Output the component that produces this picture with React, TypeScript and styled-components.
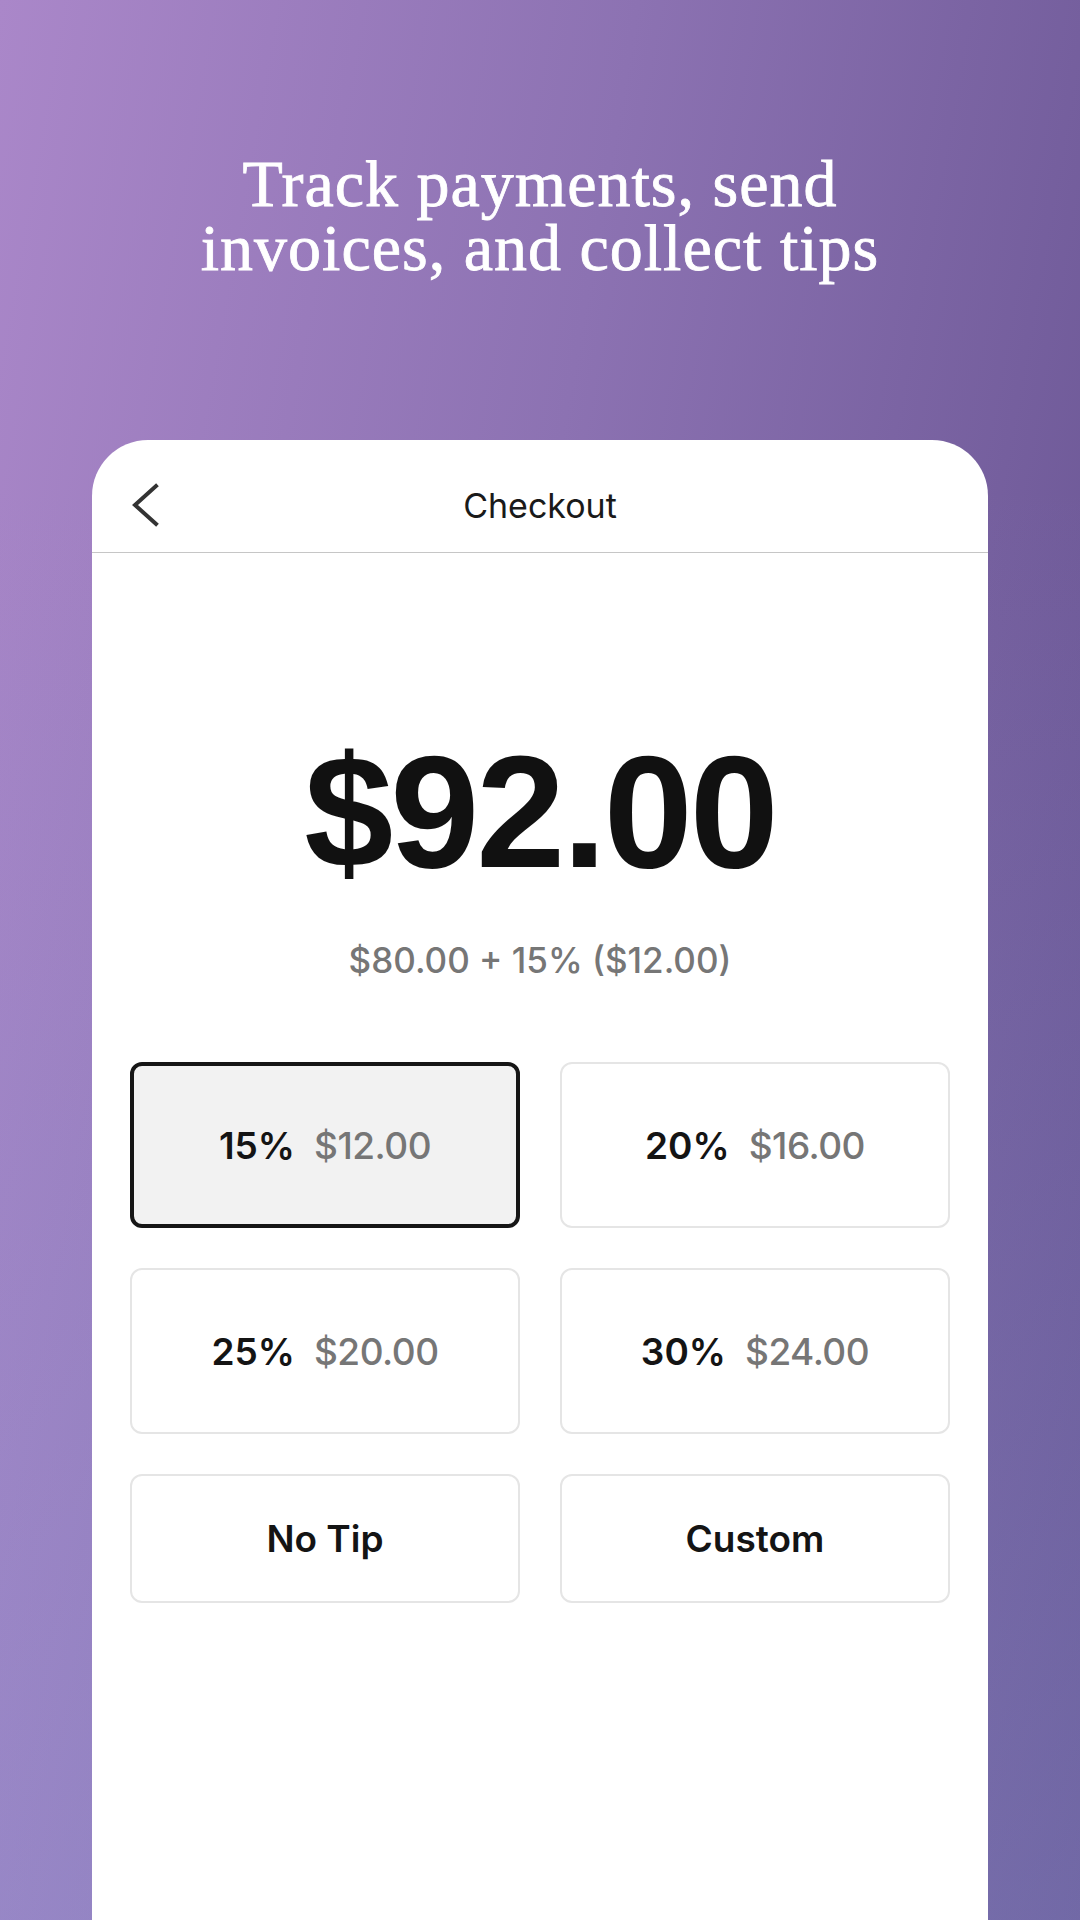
import React, { useState } from "react";
import styled, { createGlobalStyle } from "styled-components";

const GlobalStyle = createGlobalStyle`
  html, body {
    margin: 0;
    padding: 0;
  }
  body {
    font-family: Inter, "Liberation Sans", sans-serif;
    -webkit-font-smoothing: antialiased;
  }
`;

const Page = styled.div`
  height: 1920px;
  overflow: hidden;
  display: flex;
  flex-direction: column;
  align-items: center;
  background: linear-gradient(
      180deg,
      rgba(145, 160, 220, 0) 25%,
      rgba(145, 160, 220, 0.3) 100%
    ),
    linear-gradient(100deg, #aa87c9 0%, #8c72b2 45%, #64518f 100%);
`;

const Headline = styled.h1`
  margin: 152px 0 0;
  font-family: "Liberation Serif", "DejaVu Serif", serif;
  font-weight: 400;
  font-size: 66px;
  line-height: 64px;
  letter-spacing: 1px;
  color: #ffffff;
  -webkit-text-stroke: 0.8px #ffffff;
  text-align: center;
`;

const Card = styled.section`
  margin-top: 160px;
  width: 896px;
  flex: 1;
  background: #ffffff;
  border-radius: 56px 56px 0 0;
  display: flex;
  flex-direction: column;
`;

const Header = styled.header`
  box-sizing: border-box;
  height: 113px;
  padding-top: 18px;
  display: grid;
  grid-template-columns: 1fr auto 1fr;
  align-items: center;
  border-bottom: 1px solid #c6c6c6;
`;

const BackButton = styled.button`
  justify-self: start;
  margin-left: 39px;
  padding: 0;
  border: 0;
  background: none;
  display: flex;
  cursor: pointer;
`;

const Title = styled.h2`
  margin: 0;
  font-size: 34px;
  font-weight: 400;
  color: #1a1a1a;
`;

const Amount = styled.div`
  margin-top: 179px;
  text-align: center;
  font-family: "Liberation Sans", Arial, sans-serif;
  font-size: 160px;
  line-height: 160px;
  font-weight: 700;
  letter-spacing: -3px;
  color: #111111;
`;

const Breakdown = styled.div`
  margin-top: 48px;
  text-align: center;
  font-size: 35px;
  line-height: 40px;
  font-weight: 500;
  color: #767676;
`;

const TipGrid = styled.div`
  margin-top: 82px;
  padding: 0 38px;
  display: grid;
  grid-template-columns: 1fr 1fr;
  gap: 40px;
`;

const TipButton = styled.button<{ $selected: boolean; $short: boolean }>`
  box-sizing: border-box;
  height: ${(p) => (p.$short ? "129px" : "166px")};
  border-radius: 12px;
  border: ${(p) => (p.$selected ? "4px solid #161616" : "2px solid #e5e5e5")};
  background: ${(p) => (p.$selected ? "#f2f2f2" : "#ffffff")};
  display: flex;
  align-items: center;
  justify-content: center;
  gap: 19px;
  font-family: inherit;
  font-size: 37px;
  cursor: pointer;
`;

const Percent = styled.span`
  font-weight: 600;
  color: #141414;
`;

const TipValue = styled.span`
  font-weight: 500;
  letter-spacing: -0.5px;
  color: #767676;
`;

type Tip = { id: string; percent?: string; value?: string; label?: string };

const tips: Tip[] = [
  { id: "15", percent: "15%", value: "$12.00" },
  { id: "20", percent: "20%", value: "$16.00" },
  { id: "25", percent: "25%", value: "$20.00" },
  { id: "30", percent: "30%", value: "$24.00" },
  { id: "none", label: "No Tip" },
  { id: "custom", label: "Custom" },
];

const ChevronLeft = () => (
  <svg width="28" height="44" viewBox="0 0 28 44" fill="none">
    <polyline
      points="25,3 4,22 25,41"
      stroke="#333333"
      strokeWidth="4"
      strokeLinecap="square"
      strokeLinejoin="miter"
    />
  </svg>
);

const App: React.FC = () => {
  const [selected, setSelected] = useState("15");
  return (
    <Page>
      <GlobalStyle />
      <Headline>
        Track payments, send
        <br />
        invoices, and collect tips
      </Headline>
      <Card>
        <Header>
          <BackButton aria-label="Back">
            <ChevronLeft />
          </BackButton>
          <Title>Checkout</Title>
          <span />
        </Header>
        <Amount>$92.00</Amount>
        <Breakdown>$80.00 + 15% ($12.00)</Breakdown>
        <TipGrid>
          {tips.map((t) => (
            <TipButton
              key={t.id}
              $selected={selected === t.id}
              $short={!!t.label}
              onClick={() => setSelected(t.id)}
            >
              {t.label ? (
                <Percent>{t.label}</Percent>
              ) : (
                <>
                  <Percent>{t.percent}</Percent>
                  <TipValue>{t.value}</TipValue>
                </>
              )}
            </TipButton>
          ))}
        </TipGrid>
      </Card>
    </Page>
  );
};

export default App;
